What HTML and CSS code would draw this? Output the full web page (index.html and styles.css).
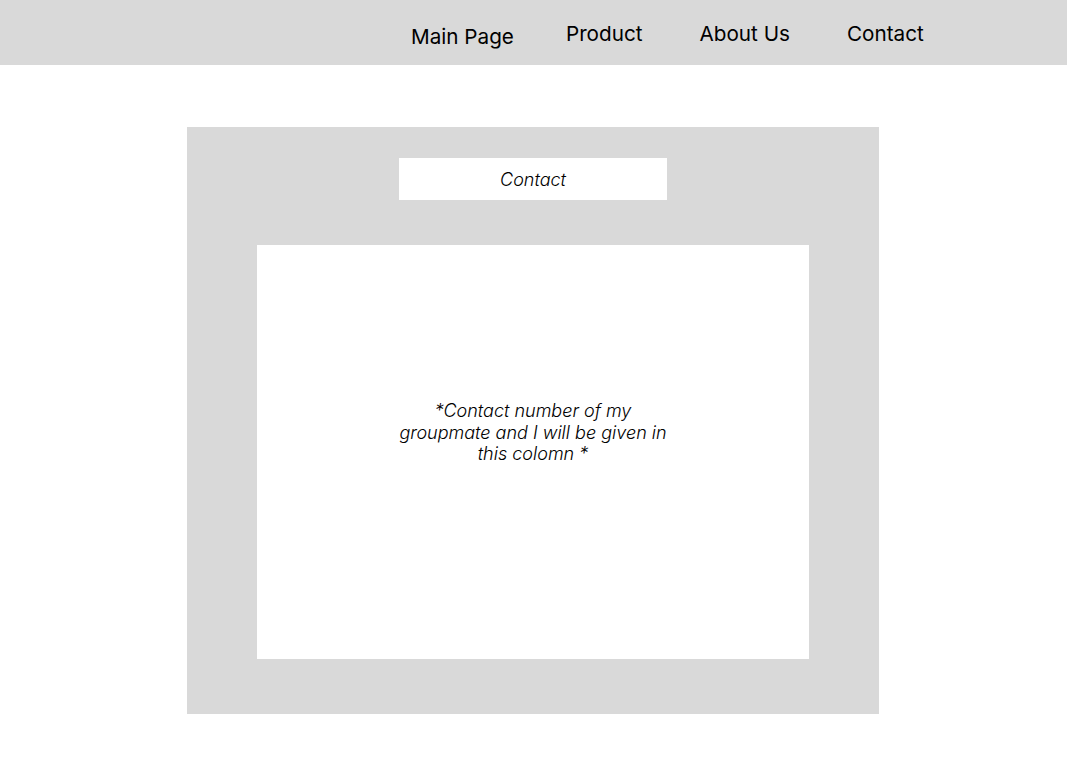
FILE: index.html
```html
<!DOCTYPE html>
<html lang="en">
<head>
    <meta charset="UTF-8">
    <meta name="viewport" content="width=device-width, initial-scale=1.0">
    <title>Contact</title>
    <link rel="stylesheet" href="styles.css">
</head>
<body>
    <header class="topbar">
        <nav class="nav">
            <a href="#" class="nav-link nav-link-main">Main Page</a>
            <a href="#" class="nav-link">Product</a>
            <a href="#" class="nav-link">About Us</a>
            <a href="#" class="nav-link">Contact</a>
        </nav>
    </header>

    <main class="panel">
        <div class="panel-title">Contact</div>
        <div class="panel-body">
            <p class="note">*Contact number of my groupmate and I will be given in this colomn *</p>
        </div>
    </main>
</body>
</html>
```

FILE: styles.css
```css
body {
    margin: 0;
    background: #fff;
    color: #000;
    font-family: 'Inter', 'Liberation Sans', sans-serif;
}

.topbar {
    background: #d9d9d9;
    height: 65px;
}

.nav {
    display: flex;
    align-items: flex-start;
    padding-left: 411px;
}

.nav-link {
    color: #000;
    text-decoration: none;
    font-size: 20.7px;
    line-height: 24px;
    margin-top: 22px;
    margin-right: 57px;
}

.nav-link-main {
    margin-top: 25px;
    margin-right: 52px;
}

.panel {
    width: 692px;
    height: 587px;
    margin: 62px 0 0 187px;
    padding-top: 31px;
    box-sizing: border-box;
    background: #d9d9d9;
    display: flex;
    flex-direction: column;
    align-items: center;
}

.panel-title {
    width: 268px;
    height: 42px;
    background: #fff;
    display: flex;
    align-items: center;
    justify-content: center;
    font-size: 18px;
    font-weight: 300;
    font-style: italic;
}

.panel-body {
    width: 552px;
    height: 414px;
    margin-top: 45px;
    padding-top: 155px;
    box-sizing: border-box;
    background: #fff;
}

.note {
    width: 280px;
    margin: 0 auto;
    font-size: 18px;
    font-weight: 300;
    font-style: italic;
    line-height: 21.5px;
    text-align: center;
}
```
